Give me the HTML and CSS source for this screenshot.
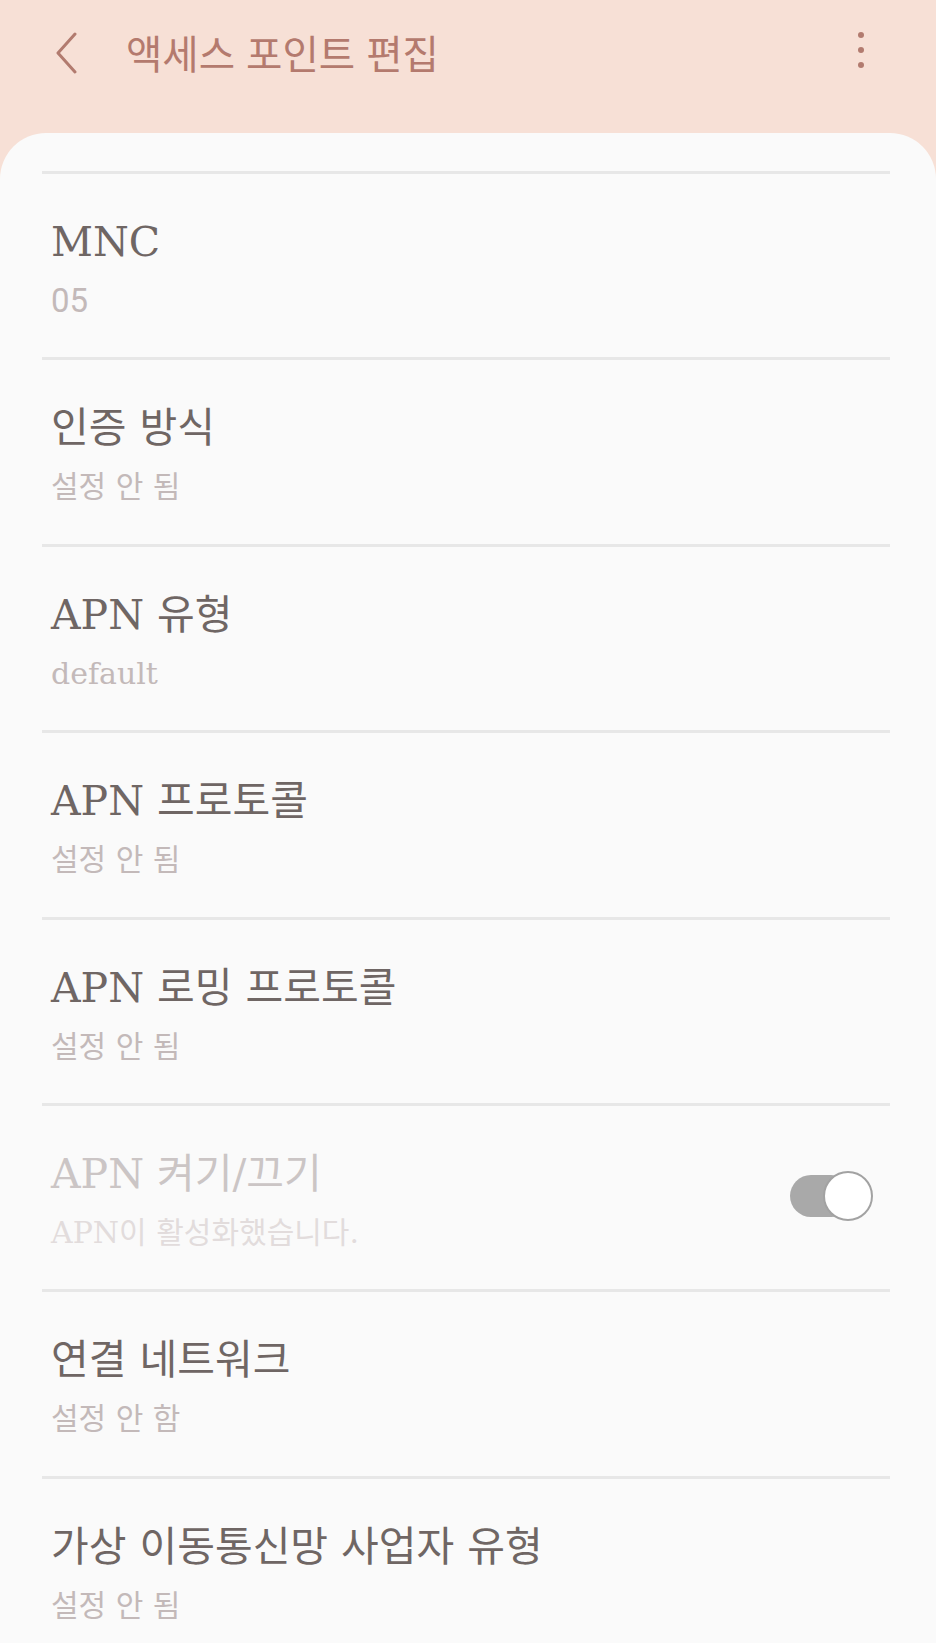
FILE: index.html
```html
<!DOCTYPE html>
<html lang="ko">
<head>
<meta charset="utf-8">
<title>액세스 포인트 편집</title>
<link rel="stylesheet" href="styles.css">
</head>
<body>
<header class="appbar">
  <div class="back">
    <svg width="24" height="42" viewBox="0 0 24 42"><polyline points="20,2 3,21 20,40" fill="none" stroke="#b27b6f" stroke-width="3" stroke-linecap="round" stroke-linejoin="round"/></svg>
  </div>
  <h1 class="appbar-title">액세스 포인트 편집</h1>
  <div class="more">
    <span class="dot"></span><span class="dot"></span><span class="dot"></span>
  </div>
</header>
<main class="card">
  <div class="row">
    <div class="text">
      <div class="title">MNC</div>
      <div class="sub num">05</div>
    </div>
  </div>
  <div class="row">
    <div class="text">
      <div class="title">인증 방식</div>
      <div class="sub">설정 안 됨</div>
    </div>
  </div>
  <div class="row">
    <div class="text">
      <div class="title">APN 유형</div>
      <div class="sub">default</div>
    </div>
  </div>
  <div class="row">
    <div class="text">
      <div class="title">APN 프로토콜</div>
      <div class="sub">설정 안 됨</div>
    </div>
  </div>
  <div class="row">
    <div class="text">
      <div class="title">APN 로밍 프로토콜</div>
      <div class="sub">설정 안 됨</div>
    </div>
  </div>
  <div class="row disabled">
    <div class="text">
      <div class="title">APN 켜기/끄기</div>
      <div class="sub">APN이 활성화했습니다.</div>
    </div>
    <div class="toggle">
      <span class="track"></span>
      <span class="knob"></span>
    </div>
  </div>
  <div class="row">
    <div class="text">
      <div class="title">연결 네트워크</div>
      <div class="sub">설정 안 함</div>
    </div>
  </div>
  <div class="row">
    <div class="text">
      <div class="title">가상 이동통신망 사업자 유형</div>
      <div class="sub">설정 안 됨</div>
    </div>
  </div>
</main>
</body>
</html>
```

FILE: styles.css
```css
html, body {
  margin: 0;
  padding: 0;
  overflow: hidden;
}
body {
  background: #f7e0d6;
  font-family: "DejaVu Serif", "Noto Sans CJK KR", serif;
}
.appbar {
  height: 104px;
  margin-bottom: 29px;
  display: flex;
  align-items: center;
  padding: 0 0 0 55px;
  box-sizing: border-box;
}
.back {
  width: 24px;
  height: 42px;
  display: flex;
  margin-top: 2px;
}
.appbar-title {
  margin: 0 0 0 47px;
  font-family: "Noto Sans CJK KR", sans-serif;
  font-weight: 400;
  font-size: 39.5px;
  line-height: 50px;
  color: #b47a6e;
  flex: 1;
}
.more {
  width: 7px;
  display: flex;
  flex-direction: column;
  gap: 9px;
  margin-right: 71px;
  margin-top: -4px;
}
.dot {
  width: 6px;
  height: 6px;
  border-radius: 50%;
  background: #b27b6f;
}
.card {
  background: #fafafa;
  border-radius: 46px 46px 0 0;
  padding: 38px 46px 0 42px;
}
.row {
  border-top: 3px solid #e7e7e7;
  height: 186.4px;
  box-sizing: border-box;
  display: flex;
}
.text {
  flex: 1;
  padding: 42px 0 0 9px;
}
.title {
  font-size: 41px;
  line-height: 52px;
  color: #6f6664;
  white-space: nowrap;
}
.sub {
  margin-top: 13px;
  font-size: 30px;
  line-height: 40px;
  color: #c3b9b9;
  white-space: nowrap;
}
.sub.num {
  font-family: Roboto, "Noto Sans CJK KR", sans-serif;
  font-size: 33px;
}
.disabled .title {
  color: #cbc5c5;
}
.disabled .sub {
  color: #e2dcdc;
}
.toggle {
  align-self: center;
  position: relative;
  width: 83px;
  height: 50px;
  margin-right: 17px;
  margin-top: -4px;
}
.track {
  position: absolute;
  left: 0;
  top: 4px;
  width: 62px;
  height: 42px;
  border-radius: 21px;
  background: #a9a9a9;
}
.knob {
  position: absolute;
  right: 0;
  top: 0;
  width: 46px;
  height: 46px;
  border-radius: 50%;
  background: #ffffff;
  border: 2px solid #a2a2a2;
}
```
